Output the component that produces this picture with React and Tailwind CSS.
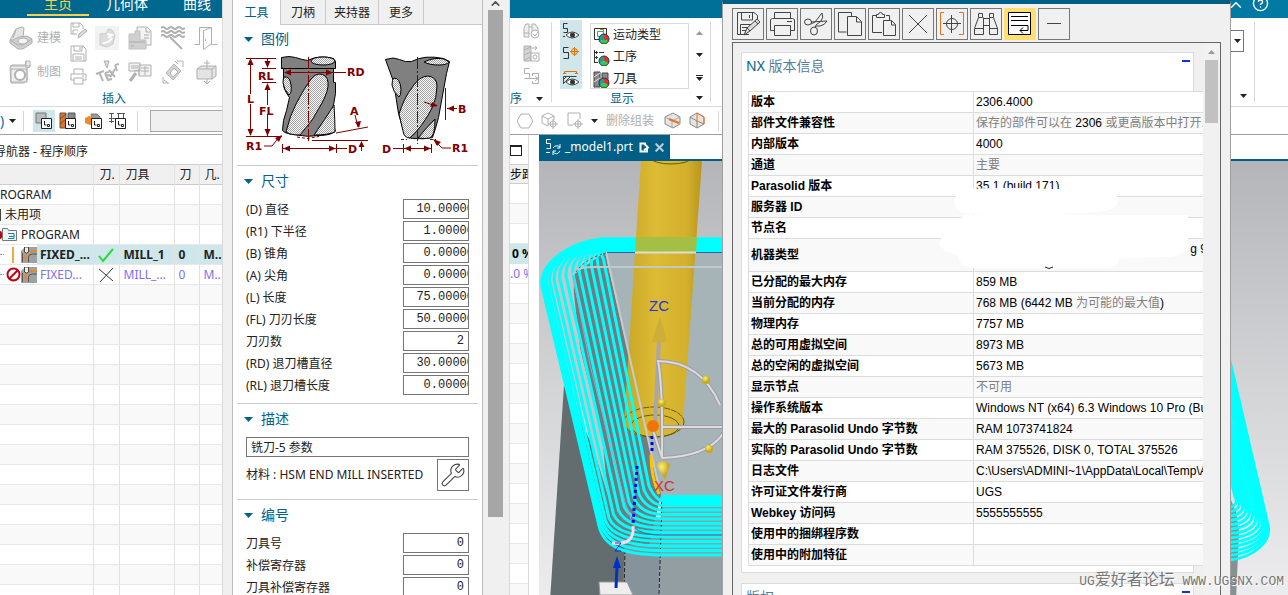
import { ChevronUp, CircleHelp, Wrench, X } from "lucide-react";

const ui = "font-['Noto_Sans','Noto_Sans_CJK_SC',sans-serif]";
const arial = "font-['Liberation_Sans','Noto_Sans_CJK_SC',sans-serif]";

const Caret = ({ className = "" }) => (
  <svg width="7" height="4" viewBox="0 0 7 4" className={`shrink-0 ${className}`}>
    <path d="M0 0h7L3.5 4z" fill="currentColor" />
  </svg>
);

const Icon = ({ size = 24, box = 24, children, className = "" }) => (
  <svg
    width={size}
    height={size}
    viewBox={`0 0 ${box} ${box}`}
    fill="none"
    stroke="currentColor"
    className={`shrink-0 ${className}`}
  >
    {children}
  </svg>
);

/* ---------- ribbon icons ---------- */

const ModelIcon = () => (
  <Icon>
    <path d="M1 14l6-11 6-2 2 1-1 9-6 6z" fill="#e4e4e4" />
    <path d="M1 14v3l8 6h5l9-6v-4l-5-3-8 1-6 3z" fill="#d0d0d0" />
    <ellipse cx="14" cy="15" rx="5" ry="3" fill="#f4f4f4" />
    <path d="M7 4l-3 8M1 14l8 5h5l9-6" />
  </Icon>
);

const DraftIcon = () => (
  <Icon>
    <path d="M1 8l2-3h13l1-4h4v6l-3 1v12l-3 3H2z" fill="#eee" />
    <path d="M2 9h16v13H2zM1 6h20M17 1v7" />
    <circle cx="11" cy="15" r="5" fill="#fff" strokeWidth="2" />
  </Icon>
);

const SaveEditIcon = () => (
  <Icon size={17} box={17}>
    <path d="M1 1h9l3 3v3M1 1v11h6M3 1v4h6V1M3 12V8h5" />
    <path d="M8 16l1-4 6-5 2 2-6 5z" fill="#ddd" />
  </Icon>
);

const SaveIcon = () => (
  <Icon size={17} box={17}>
    <path d="M1 1h12l3 3v12H1zM4 1v5h8V1M10 2v3M3 16V9h11v7M5 12h7M5 14h7" />
  </Icon>
);

const PrintIcon = () => (
  <Icon size={17} box={17}>
    <path d="M4 6V1h9v5M4 12H1V6h15v6h-3M4 10h9v6H4zM12 8h2" />
  </Icon>
);

const ShapeIcon = () => (
  <Icon>
    <path d="M0 0h24v24H0z" fill="#f2f2f2" stroke="none" />
    <path d="M5 8l7-1 1-4 4 1 3 5-2 9-6 3-7-2z" fill="#dcdcdc" stroke="#cfcfcf" />
    <path d="M12 8l5 1-4 3M8 17q6 0 9-5" stroke="#fff" strokeWidth="2" />
  </Icon>
);

const BlockIcon = () => (
  <Icon>
    <path d="M9 1h10l4 4v14H9z" fill="#f4f4f4" />
    <path d="M1 8h6V5h5v9h6v9H1z" fill="#d0d0d0" stroke="#c0c0c0" />
    <path d="M1 16h16M16 9h5M16 12h5M18 2v4h4M3 20h3" stroke="#aaa" />
  </Icon>
);

const WaveIcon = () => (
  <Icon>
    <path d="M0 2q2-2 4 0t4 0 4 0 4 0 4 0 4 0M0 6q2-2 4 0t4 0 4 0 4 0 4 0 4 0M0 10q2-2 4 0t4 0 4 0 4 0 4 0 4 0" strokeWidth="2" />
    <path d="M9 11l12 12" strokeWidth="2" />
  </Icon>
);

const DoorIcon = () => (
  <Icon>
    <path d="M0.500 18.500h5v-17h12v17h6M9.500 4.500l8-3v16l-8 6zM11.500 13v2" />
  </Icon>
);

const EngraveIcon = () => (
  <Icon>
    <path d="M1 14l8-3M4 12l4 9M10 13l4-1M10 13l3 7 4-1M11 16l4-1M14 10l6 7M20 9l-5 8M20 5l4-1M20 5l2 6" stroke="#b4b4b4" strokeWidth="2" />
    <path d="M9 1l3 7 2-7z" fill="#ddd" />
  </Icon>
);

const FormIcon = () => (
  <Icon>
    <path d="M1 3h11v8H1zM11 5h12v11H11z" fill="#f2f2f2" />
    <path d="M3 6h7M3 8h7M13 8h8M13 11h8M17 6v9" />
    <path d="M2 21l6-8" strokeWidth="3" />
    <path d="M6 11l5-1v5" />
  </Icon>
);

const FilmIcon = () => (
  <Icon>
    <path d="M5 13L13 4l7 7-8 9z" fill="#d4d4d4" />
    <path d="M9 13l4-5 4 4-5 5z" fill="#fff" />
    <path d="M16 1h6v6M8 23H2v-6M14 1l3 3M3 20l4 3" />
  </Icon>
);

const BoxArrowIcon = () => (
  <Icon>
    <path d="M3 9l4-3h15v10l-4 3H3z" fill="#e4e4e4" />
    <path d="M3 9h15v10M18 9l4-3M13 0v9M10 3h6M13 19v5M10 21l3 3 3-3" />
  </Icon>
);

const BinocularCheck = () => (
  <Icon size={17} box={17}>
    <path d="M1 15V6l2-4h3v13zM9 13V2h3l3 4v4M6 5h3M1 11h5" fill="#eee" />
    <circle cx="12" cy="12" r="4" fill="#fff" />
    <path d="M10 12l2 2 3-4" />
  </Icon>
);

const DrillCopy = () => (
  <Icon size={17} box={17}>
    <path d="M1 1h7v15H1z" fill="#d4d4d4" />
    <path d="M1 5l7-3M1 10l7-3M1 15l7-3M9 3h5l-2-2M14 3l-2 2M8 8h8v8H8z" fill="#fff" />
    <circle cx="12" cy="12" r="2" />
  </Icon>
);

const TreeExport = () => (
  <Icon size={17} box={17}>
    <path d="M6.500 0.500h-5v5h5v5h-5M9.500 8V5.500h6v10h-6V13M6 10.500h9M12 8l3 2.500-3 2.500" />
  </Icon>
);

const Eye = ({ y = 0 }) => (
  <g>
    <path d={`M4 ${12 + y}q6-6 13 0q-7 6-13 0z`} fill="#fff" stroke="#444" />
    <circle cx="10.5" cy={12 + y} r="2.5" fill="#333" stroke="none" />
  </g>
);

const PathEye = () => (
  <Icon size={18} box={18}>
    <path d="M5.500 0.500h-4v5h4v4h-4M1 13.500h2" stroke="#333" />
    <Eye />
  </Icon>
);

const PathPoint = () => (
  <Icon size={18} box={18}>
    <path d="M6.500 1.500h-5v5h5v6h-5" stroke="#333" />
    <circle cx="12.5" cy="5.5" r="3" stroke="#e07000" />
    <path d="M12.500 1v9M8 5.500h9" stroke="#e07000" />
  </Icon>
);

const StockEye = () => (
  <Icon size={18} box={18}>
    <path d="M2.500 5V2.500h12V5M1 4.500h3M13 4.500h3" stroke="#e07000" />
    <path d="M1.500 15V7.500h13M1 11l4-4M1 15l8-8" stroke="#444" />
    <Eye y={1} />
  </Icon>
);

const Rgb = () => (
  <g stroke="none">
    <path d="M11 12V7a5 5 0 0 1 4.300 7.500z" fill="#e62f2f" />
    <path d="M11 12V7a5 5 0 0 0-4.300 7.500z" fill="#1a9fa0" />
    <path d="M11 12l4.300 2.500a5 5 0 0 1-8.600 0z" fill="#25d04a" />
    <circle cx="11" cy="12" r="5" stroke="#333" fill="none" />
  </g>
);

const MotionIcon = () => (
  <Icon size={17} box={17}>
    <path d="M1.500 1.500h12v11h-12z" stroke="#333" />
    <path d="M4.500 4.500h6v5h-6z" stroke="#1cc04a" />
    <path d="M7 2.500h3.500V7" stroke="#e07000" />
    <Rgb />
  </Icon>
);

const OperationIcon = () => (
  <Icon size={17} box={17}>
    <path d="M1.500 1v13M1 3.500h4M1 8.500h4M1 13.500h4M6 3.500h5M3.500 2v3M3.500 7v3" stroke="#333" />
    <Rgb />
  </Icon>
);

const ToolIcon = () => (
  <Icon size={17} box={17}>
    <path d="M1 1h6v15H1zM9 2h6v8H9z" fill="#8a8a8a" stroke="#444" />
    <path d="M1 6l6-4M1 11l6-4" stroke="#ddd" />
    <Rgb />
  </Icon>
);

const ViewTree = ({ kind }) => (
  <Icon size={18} box={18}>
    {kind === "program" && <path d="M1 1h10v10H1z" fill="#b8bcbd" stroke="#777" />}
    {kind === "tool" && (
      <>
        <path d="M1 1h6v15H1z" fill="#e8711c" stroke="#555" />
        <path d="M1 7l6-5M1 12l6-5M9 1h7v6H9z" fill="#888" stroke="#555" />
      </>
    )}
    {kind === "geometry" && (
      <>
        <path d="M6 2h6l3 3v5H8z" fill="#999" stroke="#777" />
        <path d="M0 6l4-2 5 1v6l-4 2-5-2z" fill="#f08a24" stroke="none" />
      </>
    )}
    {kind === "method" && (
      <path d="M0 1.500h5M8 1.500h8M2.500 1v10M0 6.500h16M9.500 1v5M14.500 1v5M0 9.500h5" stroke="#555" />
    )}
    <path d="M6.500 6.500h10v10h-10z" fill="#fff" stroke="#222" />
    <path d="M9.500 9v4h2M12.500 12.500h2v2h-2z" stroke="#222" />
  </Icon>
);

/* ---------- left window ---------- */

const LeftRibbon = () => (
  <div className="flex h-[89px] border-b border-[#d9d9d9] text-[#b0b0b0]">
    <div className="w-[68px] shrink-0 pt-[3px] pl-[9px] text-xs">
      <button className="flex h-[34px] w-full items-center gap-1">
        <ModelIcon />
        <span className="whitespace-nowrap">建模</span>
      </button>
      <button className="flex h-[34px] w-full items-center gap-1">
        <DraftIcon />
        <span className="whitespace-nowrap">制图</span>
      </button>
    </div>
    <div className="flex w-[20px] shrink-0 flex-col items-center gap-[6px] pt-1">
      <SaveEditIcon />
      <SaveIcon />
      <PrintIcon />
    </div>
    <div className="pl-[7px]">
      <div className="grid grid-cols-[repeat(4,24px)] grid-rows-[34px_34px] items-center gap-x-[9px] pt-[3px]">
        <ShapeIcon />
        <BlockIcon />
        <WaveIcon />
        <DoorIcon />
        <EngraveIcon />
        <FormIcon />
        <FilmIcon />
        <BoxArrowIcon />
      </div>
      <div className="pl-[7px] text-xs leading-[19px] text-[#00628b]">插入</div>
    </div>
  </div>
);

const FilterBar = () => (
  <div className="flex h-7 items-center border-b border-[#a0a0a0]">
    <span className="w-2 shrink-0 text-sm text-[#0070b0]">)</span>
    <Caret className="ml-px text-[#222]" />
    <div className="ml-[7px] h-5 w-px shrink-0 bg-[#d5d5d5]" />
    <button className="ml-[9px] flex h-[22px] w-[22px] shrink-0 items-center justify-center bg-[#cfe6ea]">
      <ViewTree kind="program" />
    </button>
    <button className="ml-1 shrink-0">
      <ViewTree kind="tool" />
    </button>
    <button className="ml-2 shrink-0">
      <ViewTree kind="geometry" />
    </button>
    <button className="ml-[6px] shrink-0">
      <ViewTree kind="method" />
    </button>
    <div className="ml-[10px] h-5 w-px shrink-0 bg-[#d5d5d5]" />
    <input
      aria-label="查找"
      className="ml-3 h-[22px] w-[90px] shrink-0 border border-[#a8a8a8] bg-[#f0f0f0]"
    />
  </div>
);

const OpIcon = () => (
  <Icon size={16} box={16}>
    <path d="M0 4l4-4h12v16H0z" fill="#9da3a4" stroke="none" />
    <path d="M4.500 14V9q0-4 5-5H16" stroke="#e8862a" strokeWidth="2" />
    <path d="M7.500 15v-5q0-3 4-3H16M1.500 15V6" stroke="#555" />
    <path d="M3.500 0v5q2 2 4 0V0z" fill="#eee" stroke="#444" />
  </Icon>
);

const cell = "border-r border-[#e2e2e2] overflow-hidden whitespace-nowrap p-0";

const Navigator = () => (
  <table className="w-[233px] table-fixed border-collapse text-xs leading-[19px] text-[#222]">
    <colgroup>
      <col className="w-[93px]" />
      <col className="w-[26px]" />
      <col className="w-[55px]" />
      <col className="w-[25px]" />
      <col className="w-[34px]" />
    </colgroup>
    <thead>
      <tr className="h-[19px] border-y border-[#ccc] bg-[#f0f0f0] text-left">
        <th className={cell} />
        <th className={`${cell} pl-[6px] font-normal`}>刀.</th>
        <th className={`${cell} pl-[6px] font-normal`}>刀具</th>
        <th className={`${cell} pl-[5px] font-normal`}>刀</th>
        <th className={`${cell} pl-[5px] font-normal`}>几.</th>
      </tr>
    </thead>
    <tbody>
      <tr className="h-5 border-b border-[#e8e8e8]">
        <td className={cell}>ROGRAM</td>
        <td className={cell} />
        <td className={cell} />
        <td className={cell} />
        <td className={cell} />
      </tr>
      <tr className="h-5 border-b border-[#e8e8e8] bg-[#f9f9f9]">
        <td className={cell}>
          <span className="flex items-center gap-1">
            <span className="h-3 w-px bg-[#444]" />
            未用项
          </span>
        </td>
        <td className={cell} />
        <td className={cell} />
        <td className={cell} />
        <td className={cell} />
      </tr>
      <tr className="h-5 border-b border-[#e8e8e8]">
        <td className={cell}>
          <span className="flex items-center">
            <span className="h-2 w-[2px] rounded-r bg-[#c00010]" />
            <Icon size={15} box={15}>
              <path d="M0.500 1.500h5l1 2h8v10h-14z" fill="#eef3f4" stroke="#777" />
              <path d="M6 6.500h6v5H6M7 9.500h5" stroke="#1586a0" />
            </Icon>
            <span className="pl-1">PROGRAM</span>
          </span>
        </td>
        <td className={cell} />
        <td className={cell} />
        <td className={cell} />
        <td className={cell} />
      </tr>
      <tr className="h-5 border-b border-[#e8e8e8] bg-[#cfe6ea] font-bold">
        <td className={cell}>
          <span className="-my-px flex items-center bg-white">
            <span className="w-1 border-t border-dotted border-[#999]" />
            <span className="w-2" />
            <span className="h-4 w-[2px] bg-[#f5a93c]" />
            <span className="w-[7px]" />
            <OpIcon />
            <span className="flex-1 bg-[#cfe6ea] pl-[3px]">FIXED_...</span>
          </span>
        </td>
        <td className={cell}>
          <Icon size={16} box={16} className="ml-1">
            <path d="M1 9l4 5L15 2" stroke="#22dd33" strokeWidth="2" />
          </Icon>
        </td>
        <td className={`${cell} pl-1`}>MILL_1</td>
        <td className={`${cell} pl-1`}>0</td>
        <td className={`${cell} pl-1`}>M..</td>
      </tr>
      <tr className="h-5 border-b border-[#e8e8e8] text-[#7f6ff2]">
        <td className={cell}>
          <span className="flex items-center">
            <span className="mr-[2px] w-1 border-t border-dotted border-[#999]" />
            <Icon size={15} box={15}>
              <circle cx="7.500" cy="7.500" r="6" stroke="#c00010" strokeWidth="2" />
              <path d="M12 3l-9 9" stroke="#c00010" strokeWidth="2" />
            </Icon>
            <OpIcon />
            <span className="pl-[3px]">FIXED...</span>
          </span>
        </td>
        <td className={cell}>
          <Icon size={16} box={16} className="ml-1">
            <path d="M1 2l14 12M15 1L2 15" stroke="#333" />
          </Icon>
        </td>
        <td className={`${cell} pl-1`}>MILL_...</td>
        <td className={`${cell} pl-1`}>0</td>
        <td className={`${cell} pl-1`}>M..</td>
      </tr>
      {Array.from({ length: 16 }, (_, i) => (
        <tr key={i} className="h-5 border-b border-[#e8e8e8] even:bg-[#f9f9f9]">
          <td className={cell} />
          <td className={cell} />
          <td className={cell} />
          <td className={cell} />
          <td className={cell} />
        </tr>
      ))}
    </tbody>
  </table>
);

const menuTab = "mb-[2px] h-7 shrink-0 border-b-2 pt-[6px] leading-5";

const LeftWindow = () => (
  <section className="w-[222px] shrink-0 overflow-hidden bg-white">
    <nav className="flex h-[18px] items-end overflow-hidden bg-[#00678f] text-sm text-white">
      <button className={`${menuTab} ml-[27px] w-[62px] border-[#ffcf4a] text-[#ffcf4a]`}>主页</button>
      <button className={`${menuTab} w-[76px] border-transparent`}>几何体</button>
      <button className={`${menuTab} w-[64px] border-transparent`}>曲线</button>
    </nav>
    <LeftRibbon />
    <FilterBar />
    <h2 className="flex h-[29px] items-center overflow-hidden pt-1 text-xs whitespace-nowrap text-[#222]">
      <span className="-ml-[6px]">导航器 - 程序顺序</span>
    </h2>
    <Navigator />
  </section>
);

/* ---------- tool dialog ---------- */

const CutterFigure = () => (
  <svg viewBox="242 56 232 104" className="block h-[104px] w-[232px]" fill="none">
    <defs>
      <pattern id="dither" width="2" height="2" patternUnits="userSpaceOnUse">
        <path d="M0 0h2v2H0z" fill="#fff" />
        <path d="M0 0h1v1H0zM1 1h1v1H1z" fill="#a0a0a0" />
      </pattern>
    </defs>
    <g stroke="#000">
      <path
        d="M281.500 59.500q8-2 14 0t12 3q12-6 26-2l2 3v7h-2v14h2v11q-3 14-3 24 0 10 3 13-2 4-14 5-15 2-28-1-9-1-11-4 0-10 4-20l3-13q-7-9-6-16v-13l-2-1z"
        fill="#808080"
      />
      <ellipse cx="323" cy="63" rx="12" ry="4" fill="url(#dither)" />
      <path d="M281 70.500h55" />
      <path d="M284 79q6-1 7 8 1 8-2 10-5-5-6-12 0-5 1-6z" fill="url(#dither)" />
      <path
        d="M319 76q8 0 9 8 1 8-6 21-8 17-22 32-10 0-14-3 4-17 10-28 7-14 15-25 4-5 8-5z"
        fill="url(#dither)"
      />
      <path d="M334 107q-9 14-20 30 14 0 21-3 0-12-1-27z" fill="url(#dither)" />
      <path
        d="M385.500 61.500q8-3 14 0t12 2q13-7 32-3l6 3-3 12-8 44q-3 12-6 20-8 2-20 1-8-1-9-8l-5-17-5-32z"
        fill="#808080"
      />
      <path d="M424 64q10-5 20-3l5 3q-2 3-10 3-10 0-15-3z" fill="url(#dither)" />
      <path d="M394 80q6 0 7 11 0 7-2 8-6-5-7-12 0-6 2-7z" fill="url(#dither)" />
      <path
        d="M428 78q9 1 9 10 0 12-5 22-9 18-22 30-6 0-7-7l-4-17q5-16 12-25 8-13 17-13z"
        fill="url(#dither)"
      />
      <path d="M435 121q-8 8-17 19 8 1 12 0 5-2 5-19z" fill="url(#dither)" />
    </g>
    <g stroke="#800000">
      <path d="M246 60.500h30M250.500 62v34M250.500 106v30M246 138.500h36M267.500 60v4M262 70.500h14M262 84.500h14M267.500 87v20M267.500 116v22M285 74.500h61" />
      <path d="M282.500 146v9M336.500 146v9M283 150.500h64M336 135l32-6M312 142.500h56M355 117l3 12M361.500 144v9M264 148h8l8-10" />
      <path d="M308.500 59v84M417.500 59v87" strokeDasharray="12 2 2 2" />
      <path d="M403.500 146v9M431.500 146v9M393 150.500h38M445.500 90v32M447 110.500h10M424 104l12 4M435 143l7 7h9" />
      <path d="M297 139l10 1.500 12-2M401 141.500h6M430 141.500h6" strokeDasharray="3 2" />
    </g>
    <g fill="#800000">
      <path d="M250.500 60l-3 7h6zM250.500 138l-3-7h6zM267.500 70l-3-7h6zM267.500 85l-3 7h6zM267.500 138l-3-7h6z" />
      <path d="M284 74.500l7-3v6zM333 74.500l-7-3v6zM283 150.500l7-3v6zM336 150.500l-7-3v6zM404 150.500l7-3v6zM431 150.500l-7-3v6z" />
      <path d="M447 110.500l7-3v6zM438 108l-8 1 2-5zM359 130l-4-6 6-1zM361.500 143l-3 6h6zM282 137l-3 7-4-4zM433 141l8 3-4 4z" />
    </g>
    <g fill="#800000" className="font-['DejaVu_Sans',sans-serif] text-[11px] font-bold">
      <text x="247" y="105">L</text>
      <text x="258" y="82">RL</text>
      <text x="259" y="117">FL</text>
      <text x="347" y="78">RD</text>
      <text x="350" y="117">A</text>
      <text x="246" y="152">R1</text>
      <text x="348" y="155">D</text>
      <text x="382" y="155">D</text>
      <text x="458" y="115">B</text>
      <text x="452" y="154">R1</text>
    </g>
  </svg>
);

const Section = ({ title, children, last }) => (
  <div className={`mx-1 pt-px ${last ? "" : "border-b border-[#c8c8c8]"}`}>
    <h3 className="mb-1 flex h-7 items-center gap-2 pl-[7px] text-sm text-[#00628b]">
      <svg width="9" height="5" viewBox="0 0 9 5">
        <path d="M0 0h9L4.500 5z" fill="#00628b" />
      </svg>
      {title}
    </h3>
    {children}
  </div>
);

const NumberRow = ({ id, label, value, clipped }) => (
  <div className="flex h-5 items-center justify-between">
    <label htmlFor={id} className="pt-px whitespace-nowrap">
      {label}
    </label>
    <div className="h-5 w-[66px] overflow-hidden border border-[#767676]">
      <input
        id={id}
        defaultValue={value}
        className={`h-[18px] text-right font-['Liberation_Mono',monospace] text-xs outline-none ${
          clipped ? "w-[70px]" : "w-full pr-1"
        }`}
      />
    </div>
  </div>
);

const sizes = [
  ["(D) 直径", "10.00000"],
  ["(R1) 下半径", "1.00000"],
  ["(B) 锥角", "0.00000"],
  ["(A) 尖角", "0.00000"],
  ["(L) 长度", "75.00000"],
  ["(FL) 刀刃长度", "50.00000"],
  ["刀刃数", "2"],
  ["(RD) 退刀槽直径", "30.00000"],
  ["(RL) 退刀槽长度", "0.00000"],
];

const numbers = ["刀具号", "补偿寄存器", "刀具补偿寄存器"];

const ToolDialog = () => (
  <section className="flex w-[288px] shrink-0 border-r border-l border-[#d9d9d9] bg-[#f0f0f0] text-xs text-[#222]">
    <div className="ml-[9px] w-[251px] shrink-0 overflow-hidden border-r border-l border-[#bdbdbd] bg-white">
      <div className="flex h-[25px] bg-[#f0f0f0]" role="tablist">
        <button role="tab" className="w-12 border-r border-[#c8c8c8] bg-white pt-px text-[#00628b]">
          工具
        </button>
        <button role="tab" className="w-[45px] border-r border-b border-[#c8c8c8] pt-[2px]">
          刀柄
        </button>
        <button role="tab" className="w-[53px] border-r border-b border-[#c8c8c8] pt-[2px]">
          夹持器
        </button>
        <button role="tab" className="w-[45px] border-r border-b border-[#c8c8c8] pt-[2px]">
          更多
        </button>
        <div className="flex-1 border-b border-[#c8c8c8]" />
      </div>
      <div className="-mt-px">
        <Section title="图例">
          <div className="-mt-[3px] h-[111px] pl-[5px]">
            <CutterFigure />
          </div>
        </Section>
        <Section title="尺寸">
          <div className="flex flex-col gap-[2px] pr-[9px] pb-2 pl-[9px]">
            {sizes.map(([label, value], i) => (
              <NumberRow
                key={label}
                id={`size-${i}`}
                label={label}
                value={value}
                clipped={value.includes(".")}
              />
            ))}
          </div>
        </Section>
        <Section title="描述">
          <div className="pr-[9px] pb-2 pl-[9px]">
            <input
              aria-label="描述"
              defaultValue="铣刀-5 参数"
              className="block h-5 w-full border border-[#767676] px-1"
            />
            <div className="mt-[2px] flex items-center justify-between">
              <span className="whitespace-nowrap">材料 : HSM END MILL INSERTED</span>
              <button
                aria-label="材料"
                className="flex h-8 w-8 items-center justify-center border border-[#767676] text-[#444]"
              >
                <Wrench size={26} strokeWidth={1} />
              </button>
            </div>
          </div>
        </Section>
        <Section title="编号" last>
          <div className="flex flex-col gap-[2px] pr-[9px] pl-[9px]">
            {numbers.map((label, i) => (
              <NumberRow key={label} id={`num-${i}`} label={label} value="0" />
            ))}
          </div>
        </Section>
      </div>
    </div>
    <div className="ml-[5px] flex w-[15px] flex-col items-center">
      <ChevronUp size={13} strokeWidth={3} className="-mt-[3px] shrink-0 text-[#555]" />
      <div className="h-[507px] w-full shrink-0 bg-[#a6a6a6]" />
    </div>
  </section>
);

/* ---------- graphics view ---------- */

// t moves a loop sideways, u moves its bottom run
const leftLoop = ([t, u]) => {
  const x = 542 + 62 * t;
  const y = 286 - 24 * t;
  const top = 239 + 12 * t;
  const bx = 599 + 50 * t;
  const by = 526 - 40 * t;
  const bottom = 555 - 54 * u;
  return `M724 ${top}H606C${576 + 20 * t} ${top} ${x - 4 + 4 * t} ${y - 24 + 18 * t} ${x} ${y}L${bx} ${by}C${bx + 5} ${bottom - 8 + 4 * t} ${bx + 24 - 14 * t} ${bottom} ${664} ${bottom}H724`;
};

const rightLoop = ([t, u]) => {
  const x = 1268 - 33 * t;
  const y = 525 - 28 * t;
  return `M${x - 46} ${y - 198}L${x} ${y}C${x + 4} ${y + 16 - 10 * t} ${x - 14 + 12 * t} ${558 - 50 * u} 1228 ${560 - 53 * u}`;
};

const loops = [0, 0.04, 0.08, 0.13, 0.2, 0.29, 0.39, 0.5, 0.6, 0.7, 0.8, 0.9, 1].map((t, i) => [t, i / 12]);

const Scene = ({ id, viewBox, className = "" }) => (
  <svg viewBox={viewBox} preserveAspectRatio="xMinYMin slice" className={`block ${className}`} fill="none">
    <defs>
      <linearGradient id={`${id}-sky`} x1="0" y1="161" x2="0" y2="595" gradientUnits="userSpaceOnUse">
        <stop offset="0" stopColor="#b4b5b8" />
        <stop offset="0.5" stopColor="#d2d3d5" />
        <stop offset="1" stopColor="#ececee" />
      </linearGradient>
      <linearGradient id={`${id}-shank`}>
        <stop offset="0" stopColor="#c8a526" />
        <stop offset="0.4" stopColor="#ddbb34" />
        <stop offset="0.8" stopColor="#d4b02c" />
        <stop offset="1" stopColor="#b8961e" />
      </linearGradient>
      <radialGradient id={`${id}-ball`} cx="0.4" cy="0.3">
        <stop offset="0" stopColor="#ffee80" />
        <stop offset="1" stopColor="#c8a818" />
      </radialGradient>
    </defs>
    <path d="M530 161h770v440H530z" fill={`url(#${id}-sky)`} />

    {/* part body */}
    <path d="M564 385l70 150-10 66h-74z" fill="#636c6e" />
    <path d="M625 520h36l-2 80h-36z" fill="#87939a" />
    <path d="M661 500h65v100h-67z" fill="#929ea2" />
    <path d="M662 500l-3 95M625 550l-1 45" stroke="#222" strokeDasharray="4 2" />
    <path d="M606 252h120v250h-66z" fill="#a7b4b7" />
    <path d="M572 276l33-24 56 243-12 50-35 0-14-16z" fill="#727b7d" />
    <path d="M545 290q4-22 30-24l-3 50 30 120 6 60z" fill="#c3c8ca" />
    <path d="M1231 500l5 12 3 20-3 68h-5z" fill="#879093" />

    {/* tool */}
    <path d="M641 161h61l-19 262q-3 13-29 14-26-1-30-14z" fill={`url(#${id}-shank)`} />
    <ellipse cx="671" cy="158" rx="20" ry="6" stroke="#6b5700" />
    <ellipse cx="654" cy="422" rx="30" ry="15" stroke="#6b5700" strokeDasharray="6 1" />
    <ellipse cx="655" cy="426" rx="24" ry="11" stroke="#6b5700" />

    {/* tool path */}
    <g stroke="#00ffff" strokeWidth="3">
      {loops.map((loop) => (
        <path key={loop[0]} d={leftLoop(loop)} />
      ))}
      {loops.map((loop) => (
        <path key={loop[0]} d={rightLoop(loop)} />
      ))}
      <path d="M600 245h126" strokeWidth="15" />
      <path d="M662 501h64" strokeWidth="12" />
    </g>
    <path d="M636 237h61l-1 15h-61z" fill="#a4c044" />
    <path d="M606 252.500h120" stroke="#3560a8" />
    <path d="M635 252.500h61" stroke="#ddd" strokeWidth="2" />
    <path d="M573 275q2-8 20-8h133" stroke="#c0c8ca" strokeWidth="2" />
    <path d="M606 252l53 236" stroke="#c4cbcc" strokeWidth="2" />
    <path d="M576 272q10-14 30-19" stroke="#444" strokeDasharray="2 3" />
    <path d="M573 276l17 89 35 137 7 20" stroke="#9aa4c8" />
    <path d="M633 527q10 8 25 8h68" stroke="#2f74b8" />
    <path d="M651 455q0 22 8 39" stroke="#ffc400" strokeWidth="3" />
    <path d="M652 436v18M637 466l-4 58" stroke="#0000ee" strokeWidth="3" strokeDasharray="3 3" />
    <path d="M633 526q2 20-21 17" stroke="#ffd9ec" strokeWidth="3" />

    {/* manipulator */}
    <path d="M655 424l4-84" stroke="#a8a8ac" strokeWidth="4" />
    <path d="M660 317l-8 24q7 4 15 0z" fill="#cdae38" />
    <g stroke="#9c9ca2" strokeWidth="4">
      <path d="M658 361q5 25 4 97M653 430l9 28M657 361q44 0 63 44M662 458q48-2 62-26M662 427h62" />
    </g>
    <g stroke="#dcdce0" strokeWidth="2">
      <path d="M658 361q5 25 4 97M653 430l9 28M657 361q44 0 63 44M662 458q48-2 62-26M662 427h62" />
    </g>
    <g fill={`url(#${id}-ball)`}>
      <circle cx="706" cy="380" r="4" />
      <circle cx="709" cy="449" r="4" />
      <circle cx="662" cy="403" r="4" />
      <path d="M656 464q7-5 14 0l-5 16z" />
    </g>
    <circle cx="653" cy="426" r="6" fill="#f27405" />
    <g className="font-['Liberation_Sans',sans-serif] text-[15px]">
      <text x="649" y="311" fill="#1f35e0">ZC</text>
      <text x="654" y="491" fill="#d03030">XC</text>
    </g>
    <path d="M615 543h6l-6 8h6" stroke="#1030e0" />
    <path d="M599 582h28l6 13h-33z" fill="#eee" stroke="#999" />
    <path d="M616 588l1-22" stroke="#0030c8" strokeWidth="3" />
    <path d="M617 556l-4 12h8z" fill="#0030c8" />
  </svg>
);

/* ---------- centre window ---------- */

const displayItems = [
  [MotionIcon, "运动类型"],
  [OperationIcon, "工序"],
  [ToolIcon, "刀具"],
];

const CentreRibbon = () => (
  <div className="flex h-[89px] border-b border-[#d9d9d9] text-xs text-[#222]">
    <div className="w-[41px] shrink-0">
      <div className="flex flex-col gap-[6px] pt-1 pl-[13px] text-[#b0b0b0]">
        <BinocularCheck />
        <DrillCopy />
        <TreeExport />
      </div>
      <div className="mt-[6px] flex items-center text-[#00628b]">
        <span className="w-[26px] leading-4">序</span>
        <Caret className="text-[#222]" />
      </div>
    </div>
    <div className="my-1 w-px bg-[#d9d9d9]" />
    <div className="mt-[2px] ml-2 flex h-[69px] w-[22px] shrink-0 flex-col items-center justify-around bg-[#cfe6ea]">
      <PathEye />
      <PathPoint />
      <StockEye />
    </div>
    <div className="ml-2 w-[99px] shrink-0 pt-[5px]">
      <ul className="h-[66px] border border-[#d9d9d9]">
        {displayItems.map(([ItemIcon, label]) => (
          <li key={label} className="flex h-[22px] items-center gap-[3px] pl-[2px]">
            <ItemIcon />
            {label}
          </li>
        ))}
      </ul>
      <div className="pl-5 leading-[19px] text-[#00628b]">显示</div>
    </div>
    <div className="flex w-[21px] flex-col items-center gap-[18px] pt-[13px]">
      <Caret className="rotate-180 text-[#999]" />
      <Caret />
      <span className="flex flex-col items-center gap-px">
        <span className="h-px w-[7px] bg-[#222]" />
        <Caret />
      </span>
      <Caret className="-mt-[3px]" />
    </div>
    <div className="my-1 w-px bg-[#d9d9d9]" />
  </div>
);

const AssemblyBar = () => (
  <div className="flex h-7 items-center border-b border-[#a0a0a0] text-xs text-[#b0b0b0]">
    <Icon size={16} box={16} className="ml-[7px]">
      <path d="M4 1h8l4 7-4 7H4L0 8z" />
    </Icon>
    <Icon size={17} box={17} className="ml-2">
      <path d="M1 4l6-3 6 3v4M1 4v7l6 3M1 4l6 3 6-3M7 7v7" />
      <circle cx="12" cy="12" r="3" />
      <path d="M12 7v10M7 12h10" />
    </Icon>
    <Icon size={17} box={17} className="ml-[9px]">
      <path d="M6 13H1V1h12v6" />
      <circle cx="11" cy="12" r="3" />
      <path d="M11 7v10M6 12h10" />
    </Icon>
    <Caret className="ml-[7px] text-[#222]" />
    <span className="ml-2 w-[50px] shrink-0 whitespace-nowrap">删除组装</span>
    <Icon size={17} box={17} className="ml-2">
      <path d="M1 5l8-4 7 4v7l-7 4-8-4z" fill="#e4e4e4" stroke="#888" />
      <path d="M1 5l7 4 8-4M8 9v7" stroke="#aaa" />
      <path d="M5 7l10 4" stroke="#e8711c" strokeWidth="2" />
    </Icon>
    <Icon size={17} box={17} className="ml-2">
      <path d="M1 5l7-4 7 4v7l-7 4-7-4z" fill="#e4e4e4" stroke="#888" />
      <path d="M1 5l7 4M8 9v7" stroke="#888" />
      <path d="M8 1v8l7 3M8 1l7 4v7" stroke="#e8711c" />
    </Icon>
    <div className="ml-3 h-5 w-px shrink-0 bg-[#d5d5d5]" />
  </div>
);

const CentreWindow = () => (
  <section className="flex w-[212px] shrink-0 flex-col overflow-hidden bg-white">
    <div className="h-[18px] shrink-0 bg-[#007098]" />
    <div className="shrink-0">
      <CentreRibbon />
      <AssemblyBar />
    </div>
    <div className="flex min-h-0 flex-1">
      <div className="w-[19px] shrink-0 overflow-hidden border-r border-[#d9d9d9] text-xs">
        <div className="flex h-[29px] items-center pt-[2px]">
          <span className="h-[11px] w-3 border border-t-2 border-[#222]" />
        </div>
        <div className="h-5 border-y border-[#ccc] bg-[#f0f0f0] leading-5 whitespace-nowrap">步距</div>
        <div className="h-5 border-b border-[#e8e8e8]" />
        <div className="h-5 border-b border-[#e8e8e8] bg-[#f9f9f9]" />
        <div className="h-5 border-b border-[#e8e8e8]" />
        <div className="h-5 bg-[#cfe6ea] pl-[2px] leading-5 font-bold whitespace-nowrap">0 %</div>
        <div className="h-5 border-b border-[#e8e8e8] leading-5 whitespace-nowrap text-[#7f6ff2]">.0 %</div>
        {Array.from({ length: 16 }, (_, i) => (
          <div key={i} className="h-5 border-b border-[#e8e8e8] odd:bg-[#f9f9f9]" />
        ))}
      </div>
      <div className="ml-[10px] flex min-w-0 flex-1 flex-col">
        <div className="h-[26px] shrink-0 border-b-2 border-[#005f87]">
          <div className="flex h-6 w-[131px] items-center bg-[#005f87] pl-[6px] text-xs text-white">
            <Icon size={17} box={17}>
              <path d="M5.500 0.500h-4v4h4v5h-4M1 13.500h4M8 9q3-4 7-1M15 5v4h-3M15 12q-3 5-7 1M8 16v-4h3" />
            </Icon>
            <span className="ml-[3px] w-[74px] whitespace-nowrap">_model1.prt</span>
            <Icon size={11} box={11}>
              <path d="M7 1.500H1.500v8H8V7M5 1.500l4 4L5 8" strokeWidth="2" />
            </Icon>
            <button aria-label="关闭" className="ml-[3px]">
              <X size={13} strokeWidth={4} className="text-[#b9cdd8]" />
            </button>
          </div>
        </div>
        <Scene id="main" viewBox="539 161 183 434" className="min-h-0 w-full flex-1" />
      </div>
    </div>
  </section>
);

/* ---------- information window ---------- */

const actions = [
  [
    "另存为",
    <>
      <path d="M17 26.500H5.500v-22H22l3.500 3V13M9.500 5v7h11V5M17.500 7v3M8.500 26V16.500h12M10 19.500h8M10 22.500h6" />
      <path d="M12 27l3-7 10-9 3 3-10 9zM15 20l3 3M23 13l3 3" fill="#ddd" />
    </>,
  ],
  [
    "打印",
    <path key="p" d="M8.500 11V4.500h16V11M8.500 22.500h-4v-11l2-1h20l2 1v11h-4M8.500 17.500h16v10h-16zM21 13.500h5" />,
  ],
  [
    "剪切",
    <>
      <ellipse cx="8" cy="14" rx="3.500" ry="3" />
      <ellipse cx="14" cy="23" rx="3.500" ry="4" />
      <path d="M11 16l4-2 7-9q2 4-1 8l-5 4-1 3M11 14l16-1q-2 4-7 5h-4" />
    </>,
  ],
  [
    "复制",
    <path key="c" d="M12.500 24H4.500V4.500h13V8M13.500 8.500h9l5 5v14h-14zM22.500 9v5h5" />,
  ],
  [
    "粘贴",
    <path key="v" d="M14 24.500H4.500V7.500H8M18 7.500h3.500V12M8.500 9.500v-3h2q0-2 2-2t2 2h2v3zM15.500 12.500h8l4 4v11h-12zM23.500 13v4h4" />,
  ],
  ["删除", <path key="x" d="M7 7l18 18M25 7L7 25" />],
  [
    "适合窗口",
    <>
      <path d="M8 4.500H4.500v22H8M23 4.500h4.500v22H23" stroke="#e8711c" />
      <circle cx="16" cy="16" r="5.500" />
      <path d="M15.500 7v18M7 15.500h18" />
    </>,
  ],
  [
    "查找",
    <path key="f" d="M8.500 5.500h4v4h-4zM19.500 5.500h4v4h-4zM8.500 9.500l-4 11v6h9v-17M19.500 9.500v17h8v-6l-4-11M13.500 10.500h6M13.500 17.500h6M5 20.500h8M20 20.500h8" />,
  ],
  [
    "自动换行",
    <>
      <path d="M4.500 4.500h22v22h-22z" fill="#fff" stroke="#000" />
      <path d="M7 8.500h17M7 12.500h17M7 17.500h17M24 17.500v5h-8M19 19.500l-3 3 3 3" stroke="#000" />
    </>,
  ],
  ["最小化", <path key="m" d="M9 15.500h14" />],
];

const Cn = ({ children }) => <span className="text-[#808080]">{children}</span>;

const rows = [
  ["版本", "2306.4000"],
  ["部件文件兼容性", <><Cn>保存的部件可以在</Cn> 2306 <Cn>或更高版本中打开.</Cn></>],
  ["内部版本", "4000"],
  ["通道", <Cn>主要</Cn>],
  ["Parasolid 版本", "35.1 (build 171)"],
  ["服务器 ID", ""],
  ["节点名", ""],
  ["机器类型", <span className="-mr-1 flex h-8 justify-end leading-5">g 9</span>],
  ["已分配的最大内存", "859 MB"],
  ["当前分配的内存", <>768 MB (6442 MB <Cn>为可能的最大值</Cn>)</>],
  ["物理内存", "7757 MB"],
  ["总的可用虚拟空间", "8973 MB"],
  ["总的空闲的虚拟空间", "5673 MB"],
  ["显示节点", <Cn>不可用</Cn>],
  ["操作系统版本", "Windows NT (x64) 6.3 Windows 10 Pro (Build"],
  ["最大的 Parasolid Undo 字节数", "RAM 1073741824"],
  ["实际的 Parasolid Undo 字节数", "RAM 375526, DISK 0, TOTAL 375526"],
  ["日志文件", "C:\\Users\\ADMINI~1\\AppData\\Local\\Temp\\A"],
  ["许可证文件发行商", "UGS"],
  ["Webkey 访问码", "5555555555"],
  ["使用中的捆绑程序数", ""],
  ["使用中的附加特征", ""],
];

const Panel = ({ title, children }) => (
  <div className="border border-[#dcdcdc] bg-white pb-[6px]">
    <div className="flex h-[38px] justify-between pr-[3px] pl-1">
      <h3 className="pt-[3px] text-sm leading-5 text-[#557f9c]">{title}</h3>
      <button aria-label="折叠" className="mt-[7px] h-[2px] w-2 bg-[#0a35e0]" />
    </div>
    {children}
  </div>
);

const InfoWindow = () => (
  <section className="flex min-w-[300px] flex-1 flex-col overflow-hidden border-t-4 border-r border-l border-t-[#005f87] border-r-[#a0a0a0] border-l-[#a0a0a0] bg-[#f0f0f0]">
    <div className="flex gap-[2px] px-[9px] pt-1">
      {actions.map(([label, icon]) => (
        <button
          key={label}
          aria-label={label}
          className={`h-8 w-8 border text-[#444] ${
            label === "自动换行" ? "border-[#ffdf70] bg-[#ffdf70]" : "border-[#767676]"
          }`}
        >
          <svg viewBox="1 1 30 30" className="block h-[30px] w-[30px]" fill="none" stroke="currentColor">
            {icon}
          </svg>
        </button>
      ))}
    </div>
    <div className="mt-[2px] mr-[9px] ml-[9px] flex min-h-0 flex-1 border-t border-r border-l border-[#666]">
      <div className="flex min-w-0 flex-1 flex-col gap-[10px] overflow-hidden pt-[9px] pr-[9px] pl-2">
        <Panel
          title={
            <>
              <span className="text-[#00628b]">NX</span> 版本信息
            </>
          }
        >
          <div className="relative mr-[-10px] overflow-hidden pl-[6px]">
            <table className={`${arial} w-full table-fixed border-collapse text-xs text-black`}>
              <colgroup>
                <col className="w-[225px]" />
                <col />
              </colgroup>
              <tbody>
                {rows.map(([name, value]) => (
                  <tr key={name} className="h-[21px] border border-r-0 border-[#dcdcdc] bg-white even:bg-[#f9f9f9]">
                    <th className="p-0 pl-[2px] text-left leading-5 font-bold whitespace-nowrap">{name}</th>
                    <td className="overflow-hidden border-l border-[#dcdcdc] p-0 pl-[2px] leading-5 whitespace-nowrap">
                      {value}
                    </td>
                  </tr>
                ))}
              </tbody>
            </table>
            {/* painted-over host details */}
            <svg
              viewBox="0 0 262 86"
              className="pointer-events-none absolute top-[94px] left-[198px] h-[86px] w-[262px]"
              fill="#fff"
            >
              <path d="M28 4q40-2 80 0h50q18 2 20 10 0 10-14 12-20 3-50 3H32Q14 28 14 16 16 7 28 4z" />
              <path d="M24 30q60-3 110 0h114v33q-6 8-18 9l-50 1q-2 10-14 10H32Q20 82 18 70 0 66 0 58 2 48 8 46z" />
              <path d="M105 82q4 3 8 0" stroke="#222" fill="none" />
            </svg>
          </div>
        </Panel>
        <Panel title="版权" />
      </div>
      <div className="flex w-[17px] shrink-0 flex-col items-center bg-[#f1f1f1] pt-[7px]">
        <Caret className="rotate-180 text-[#999]" />
        <div className="mt-[6px] h-[63px] w-[13px] bg-[#c1c1c1]" />
      </div>
    </div>
  </section>
);

/* ---------- right edge ---------- */

const RightEdge = () => (
  <section className="flex w-[57px] shrink-0 flex-col overflow-hidden bg-white">
    <div className="flex h-[18px] shrink-0 items-end overflow-hidden bg-[#0079a3] text-white">
      <ChevronUp size={18} strokeWidth={2} className="-ml-1 mb-1 shrink-0" />
      <CircleHelp size={17} strokeWidth={2} className="mb-[6px] ml-[7px] shrink-0" />
    </div>
    <div className="flex h-[89px] shrink-0 border-b border-[#d9d9d9] text-[#222]">
      <div className="w-[23px] pt-3">
        <button aria-label="展开" className="flex h-[22px] w-[13px] items-center justify-center border border-l-0 border-[#767676]">
          <Caret />
        </button>
        <Caret className="mt-[42px] ml-[9px]" />
      </div>
      <div className="my-1 w-px bg-[#d9d9d9]" />
    </div>
    <div className="h-7 shrink-0 border-b border-[#a0a0a0]" />
    <div className="h-[26px] shrink-0 border-b-2 border-[#005f87]" />
    <Scene id="edge" viewBox="1231 161 57 434" className="min-h-0 w-full flex-1" />
  </section>
);

export default function App() {
  return (
    <div className={`${ui} relative flex h-screen overflow-hidden bg-white`}>
      <LeftWindow />
      <ToolDialog />
      <CentreWindow />
      <InfoWindow />
      <RightEdge />
      <div className="pointer-events-none absolute right-1 bottom-[2px] font-['Liberation_Mono','Noto_Sans_CJK_SC',monospace] text-[13px] leading-5 whitespace-nowrap text-[#777] [text-shadow:1px_1px_0_#fff]">
        UG<span className="text-base">爱好者论坛</span> WWW.UGSNX.COM
      </div>
    </div>
  );
}
